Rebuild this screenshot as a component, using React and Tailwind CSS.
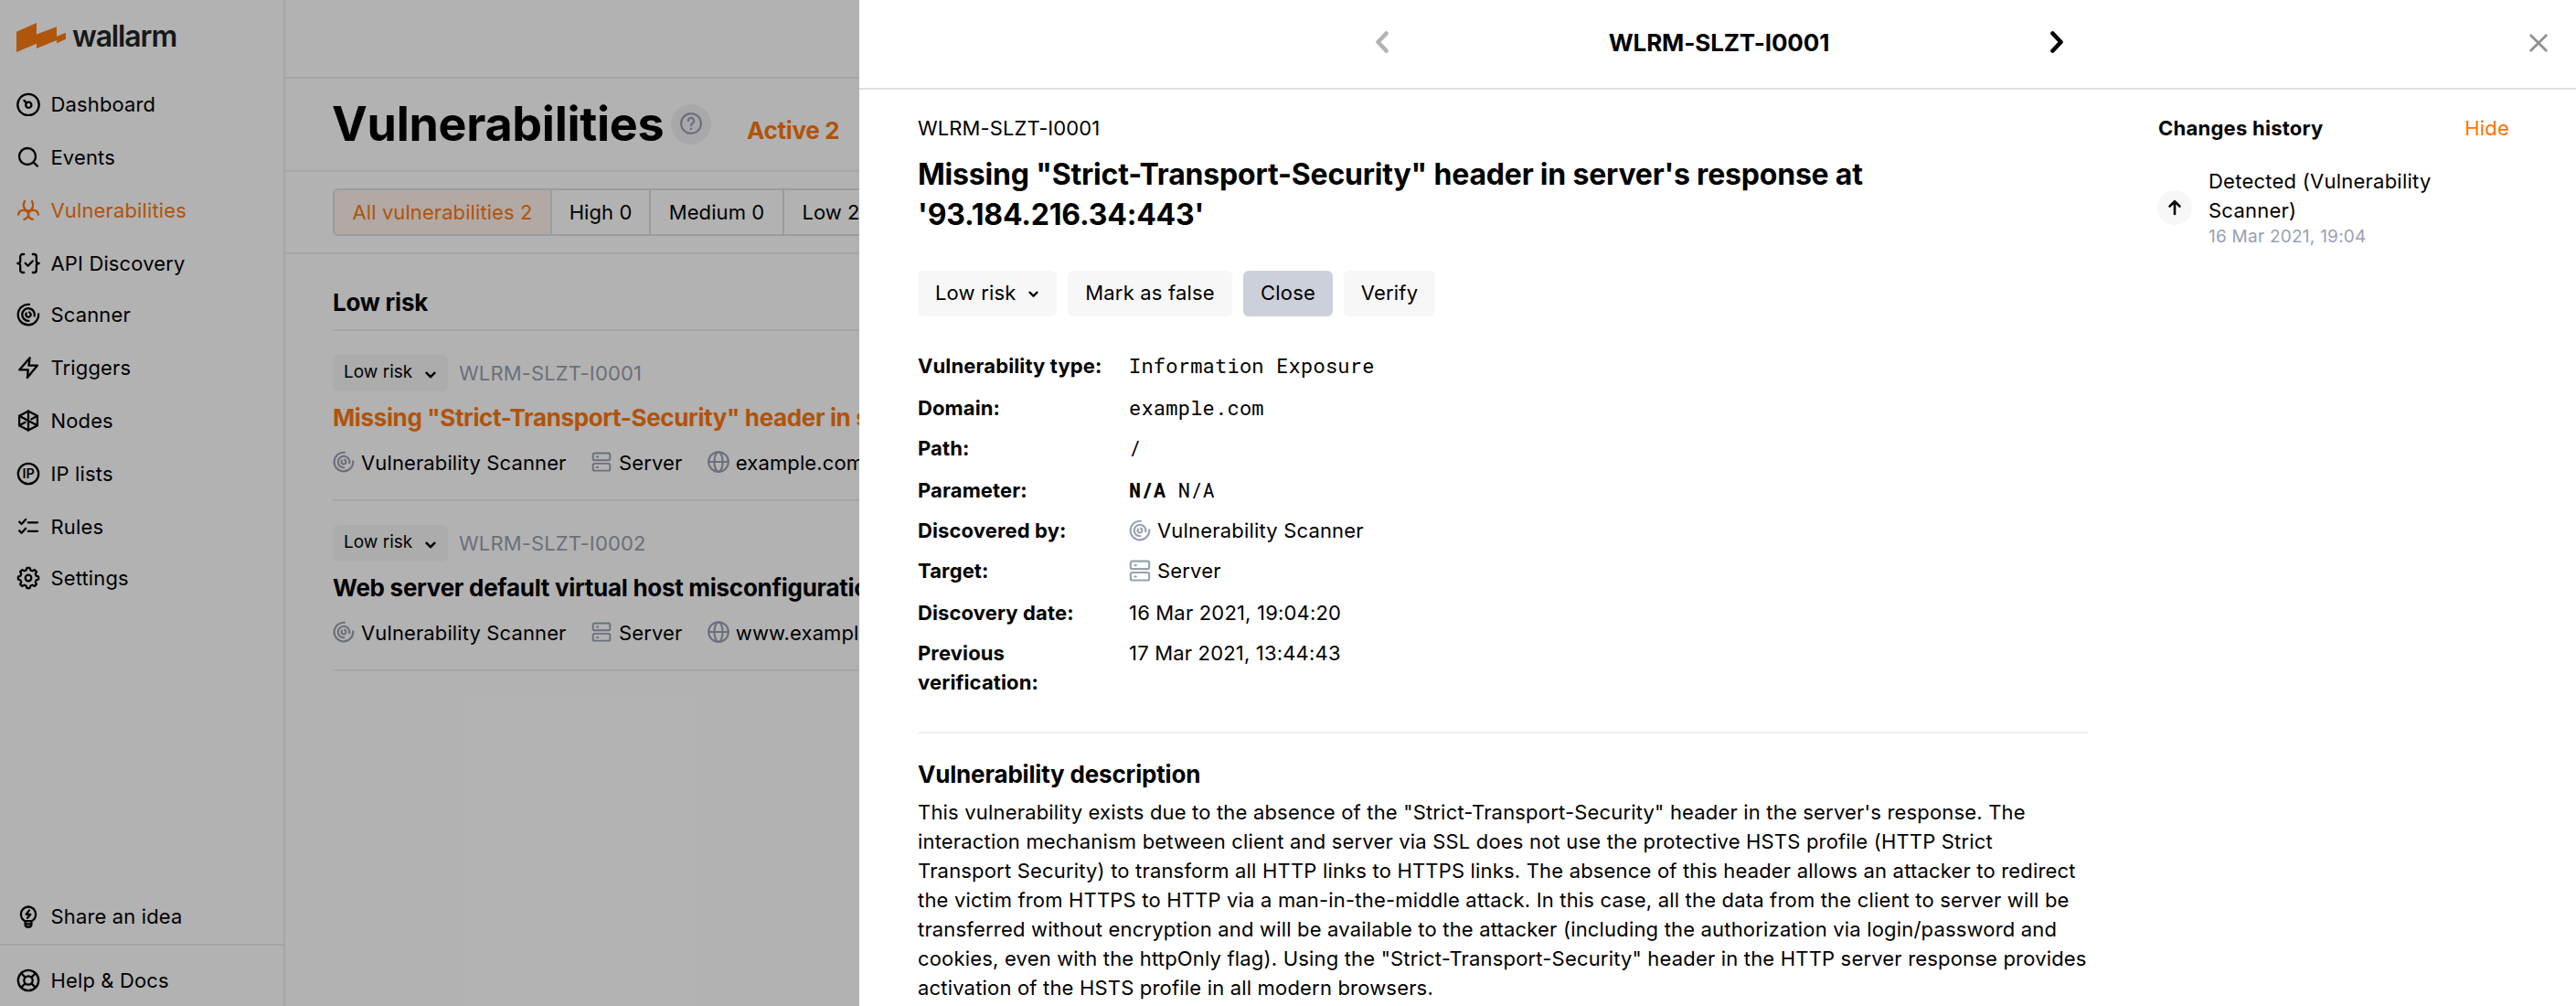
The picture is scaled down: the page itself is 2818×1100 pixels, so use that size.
import React from 'react';

const gearPath = (() => {
  const pts = [];
  for (let i = 0; i < 8; i++) {
    const base = (i * Math.PI) / 4 - Math.PI / 2;
    [[-0.27, 8.9], [-0.13, 11.2], [0.13, 11.2], [0.27, 8.9]].forEach(([d, r]) => {
      pts.push(`${(13 + r * Math.cos(base + d)).toFixed(2)} ${(13 + r * Math.sin(base + d)).toFixed(2)}`);
    });
  }
  return `M${pts.join('L')}Z`;
})();

function Icon({ className = '', stroke = 2.3, children }) {
  return (
    <svg
      viewBox="0 0 26 26"
      className={`shrink-0 ${className}`}
      fill="none"
      stroke="currentColor"
      strokeWidth={stroke}
      strokeLinecap="round"
      strokeLinejoin="round"
    >
      {children}
    </svg>
  );
}

const shapes = {
  dashboard: (
    <>
      <circle cx="13" cy="13.500" r="11.700" />
      <circle cx="13.300" cy="13.800" r="3.100" />
      <path d="M8.400 8.900l2.600 2.600" />
    </>
  ),
  search: (
    <>
      <circle cx="12" cy="12" r="9" />
      <path d="M18.600 18.600l4.400 4" />
    </>
  ),
  bio: (
    <>
      <path d="M9 2.900C6.400 7.600 8.400 13.300 13 13.300S19.600 7.600 17 2.900" />
      <path d="M2.100 17.600A5.600 5.600 0 0 1 13 17C13 20 11.200 22 8.300 22.900" />
      <path d="M23.900 17.600A5.600 5.600 0 0 0 13 17C13 20 14.800 22 17.700 22.900" />
    </>
  ),
  api: (
    <>
      <path d="M8.200 3H6.800A2.600 2.600 0 0 0 4.200 5.600V10.500C4.200 12 3 13 1.300 13 3 13 4.200 14 4.200 15.500V20.400A2.600 2.600 0 0 0 6.800 23H8.200" />
      <path d="M17.800 3H19.200A2.600 2.600 0 0 1 21.800 5.600V10.500C21.800 12 23 13 24.700 13 23 13 21.800 14 21.800 15.500V20.400A2.600 2.600 0 0 1 19.200 23H17.800" />
      <path d="M9.600 12.800l3 3 5.200-5.400" />
    </>
  ),
  scanner: (
    <>
      <path d="M14 1.900A11.200 11.200 0 1 0 24.100 12.300" />
      <path d="M13.400 19.800A6.800 6.800 0 1 1 19.700 14.400" />
      <path d="M10.800 11.400A2.700 2.700 0 1 0 14 10.500" />
    </>
  ),
  triggers: <path d="M14.600 2.200L3.200 15.400H12.800L11.900 24L23 10.600H13.400Z" />,
  nodes: (
    <>
      <path d="M13 2.500L22.900 7.800V18.200L13 23.500L3.100 18.200V7.800Z" />
      <path d="M13 2.500V23.500M3.100 7.800L22.900 18.200M22.900 7.800L16.500 11.200M3.100 18.200L9.500 14.800" />
    </>
  ),
  ip: (
    <>
      <circle cx="13" cy="13" r="11.200" />
      <text x="13.300" y="18.300" textAnchor="middle" fontSize="14.500" fontWeight="600" fontFamily="Inter" fill="currentColor" stroke="none">IP</text>
    </>
  ),
  rules: (
    <>
      <path d="M3.200 7.600l2.400 2.400 4.600-5M3.200 17.400l2.400 2.400 4.600-5" />
      <path d="M12.800 8.300H23M12.800 17.900H23" />
    </>
  ),
  settings: (
    <>
      <path d={gearPath} />
      <circle cx="13" cy="13" r="3.300" />
    </>
  ),
  idea: (
    <>
      <path d="M9.600 18.200C6.600 17 4.900 13.900 4.900 10.600A8.100 8.100 0 0 1 21.100 10.600C21.100 13.900 19.400 17 16.400 18.200Z" />
      <path d="M9.600 18.200V21.800A2.400 2.400 0 0 0 12 24.500H14A2.400 2.400 0 0 0 16.400 21.800V18.200M10 21.300H16" />
      <path d="M13.900 6.500L10.600 10.800H15.400L12 14.800" />
    </>
  ),
  help: (
    <>
      <circle cx="13" cy="13" r="11.200" />
      <circle cx="13" cy="13" r="4.700" />
      <path d="M5.200 5.200L9.600 9.600M20.800 5.200L16.400 9.600M5.200 20.800L9.600 16.400M20.800 20.800L16.400 16.400" />
    </>
  ),
  server: (
    <>
      <rect x="2" y="1.800" width="22" height="9.200" rx="2" />
      <rect x="2" y="15.200" width="22" height="9.200" rx="2" />
      <path d="M7 6.600h1.400M7 20h1.400" />
    </>
  ),
  globe: (
    <>
      <circle cx="13" cy="13" r="11.700" />
      <ellipse cx="13" cy="13" rx="4.900" ry="11.700" />
      <path d="M1.300 13H24.700" />
    </>
  ),
};

const nav = [
  { label: 'Dashboard', icon: 'dashboard' },
  { label: 'Events', icon: 'search' },
  { label: 'Vulnerabilities', icon: 'bio', active: true },
  { label: 'API Discovery', icon: 'api' },
  { label: 'Scanner', icon: 'scanner', tight: true },
  { label: 'Triggers', icon: 'triggers' },
  { label: 'Nodes', icon: 'nodes' },
  { label: 'IP lists', icon: 'ip' },
  { label: 'Rules', icon: 'rules' },
  { label: 'Settings', icon: 'settings', tight: true },
];

function NavItem({ label, icon, active, tight }) {
  return (
    <a className={`flex h-[58px] items-center gap-[11.5px] pl-[18px] tracking-[0.14px] ${tight ? '-mt-0.5' : ''} ${active ? 'text-[#fc7811]' : 'text-black'}`}>
      <Icon className="size-[26px]">{shapes[icon]}</Icon>
      <span>{label}</span>
    </a>
  );
}

function Logo() {
  return (
    <div className="flex h-[85px] items-start pl-[18px]">
      <svg viewBox="0 0 54 32" className="mt-[25px] h-8 w-[54px] shrink-0" fill="#fc7c11">
        <path d="M0 9.700L22 0V12.600L44 4.300V14.700L54 10.700V17.700L44 22.300V19L22 28V22.800L0 32Z" />
      </svg>
      <span className="mt-5 ml-[7px] text-[32px] leading-10 font-semibold tracking-[-1.15px] text-[#222426]">wallarm</span>
    </div>
  );
}

function Sidebar() {
  return (
    <aside className="flex h-full w-[312px] shrink-0 flex-col border-r-2 border-[#ededf3]">
      <Logo />
      <nav className="flex flex-col">
        {nav.map((n) => <NavItem key={n.label} {...n} />)}
      </nav>
      <div className="mt-auto flex flex-col">
        <NavItem label="Share an idea" icon="idea" />
        <div className="mt-px border-t-2 border-[#ededf3] pt-[9px]">
          <div className="-mb-px"><NavItem label="Help & Docs" icon="help" /></div>
        </div>
      </div>
    </aside>
  );
}

function Chevron({ className }) {
  return (
    <svg viewBox="0 0 12 8" className={`shrink-0 ${className}`} fill="none" stroke="currentColor" strokeWidth="2.600" strokeLinecap="round" strokeLinejoin="round">
      <path d="M1.700 1.800L6 6.200L10.300 1.800" />
    </svg>
  );
}

const items = [
  { id: 'WLRM-SLZT-I0001', title: 'Missing "Strict-Transport-Security" header in server\'s response', host: 'example.com', active: true },
  { id: 'WLRM-SLZT-I0002', title: 'Web server default virtual host misconfiguration', host: 'www.example.com' },
];

function ListItem({ id, title, host, active }) {
  return (
    <article className="border-b-2 border-[#ededf3] pt-[26px] pb-6">
      <div className="flex h-10 items-center gap-3">
        <div className="flex h-10 w-[126px] items-center gap-3.5 rounded-md bg-[#f7f7f7] pl-3 text-[19px] tracking-normal">
          <span className="-mt-0.5">Low risk</span>
          <Chevron className="mt-1 h-2 w-3" />
        </div>
        <span className="tracking-[0.15px] text-[#98a1b0]">{id}</span>
      </div>
      <h3 className={`mt-[13px] truncate text-[26px] leading-8 font-bold text-clip ${active ? 'tracking-[-0.37px] text-[#fc7811]' : 'tracking-[-0.28px] text-black'}`}>{title}</h3>
      <div className="mt-[17px] flex gap-[27.5px] tracking-[0.12px]">
        <span className="flex gap-[7px]"><Icon className="mt-[3px] size-6 text-[#98a1b0]">{shapes.scanner}</Icon>Vulnerability Scanner</span>
        <span className="flex gap-2"><Icon className="mt-1 size-[22px] text-[#98a1b0]">{shapes.server}</Icon>Server</span>
        <span className="flex gap-[7px]"><Icon className="mt-[3px] size-6 text-[#98a1b0]">{shapes.globe}</Icon>{host}</span>
      </div>
    </article>
  );
}

function Main() {
  return (
    <main className="w-[628px] shrink-0 overflow-hidden whitespace-nowrap">
      <div className="h-[86px] border-b-2 border-[#ededf3]" />
      <div className="flex h-[102px] items-start border-b-2 border-[#ededf3] pl-[51px]">
        <h1 className="mt-[18px] w-[371px] text-[52px] leading-[64px] font-bold tracking-[-0.28px]">Vulnerabilities</h1>
        <div className="mt-7 flex size-11 shrink-0 items-center justify-center rounded-full bg-[#f1f1f4] text-[#98a1b0]">
          <svg viewBox="0 0 26 26" className="-mt-0.5 size-[26px]" fill="none" stroke="currentColor" strokeWidth="2.200" strokeLinecap="round" strokeLinejoin="round">
            <circle cx="13" cy="13" r="10.900" />
            <path d="M9.900 10.200A3.100 3.100 0 1 1 14.600 12.700C13.500 13.400 13 13.900 13 15" />
            <path d="M13 18.700v.1" strokeWidth="2.600" />
          </svg>
        </div>
        <span className="mt-[41px] ml-[39px] text-[26px] leading-8 font-bold tracking-[-0.3px] text-[#fc7811]">Active 2</span>
      </div>
      <div className="border-b-2 border-[#ededf3] py-[18px] pl-[52px]">
        <div className="flex h-[52px] w-max overflow-hidden rounded-md border-2 border-[#dbdfe5] tracking-[0.08px]">
          <span className="flex w-[238px] items-center justify-center border-r-2 border-[#dbdfe5] bg-[#fff3eb] text-[#fc7811]">All vulnerabilities 2</span>
          <span className="flex w-[108px] items-center justify-center border-r-2 border-[#dbdfe5]">High 0</span>
          <span className="flex w-[146px] items-center justify-center border-r-2 border-[#dbdfe5]">Medium 0</span>
          <span className="flex w-[102px] items-center justify-center">Low 2</span>
        </div>
      </div>
      <div className="ml-[52px]">
        <h2 className="border-b-2 border-[#ededf3] pt-[37px] pb-[13px] text-[26px] leading-8 font-bold tracking-[-0.25px]">Low risk</h2>
        {items.map((i) => <ListItem key={i.id} {...i} />)}
      </div>
    </main>
  );
}

const details = [
  { k: 'Vulnerability type:', v: 'Information Exposure', mono: true, h: 'h-[46px]' },
  { k: 'Domain:', v: 'example.com', mono: true, h: 'h-11' },
  { k: 'Path:', v: '/', mono: true, h: 'h-[46px]' },
  { k: 'Parameter:', v: <><b className="font-bold">N/A</b> N/A</>, mono: true, h: 'h-11' },
  { k: 'Discovered by:', v: 'Vulnerability Scanner', icon: 'scanner', h: 'h-11' },
  { k: 'Target:', v: 'Server', icon: 'server', h: 'h-[46px]' },
  { k: 'Discovery date:', v: '16 Mar 2021, 19:04:20', h: 'h-11' },
  { k: 'Previous verification:', v: '17 Mar 2021, 13:44:43', h: 'h-16' },
];

function Details() {
  return (
    <dl className="mt-[38px]">
      {details.map((d) => (
        <div key={d.k} className={`flex ${d.h}`}>
          <dt className="w-[231px] pr-20 font-bold tracking-[0.12px]">
            <span className={d.h === 'h-16' ? 'block' : 'whitespace-nowrap'}>{d.k}</span>
          </dt>
          <dd className={`flex gap-[7px] whitespace-pre ${d.mono ? "font-['Roboto_Mono','Liberation_Mono',monospace] tracking-[0.23px]" : 'tracking-[0.18px]'}`}>
            {d.icon && <Icon className="mt-1 size-6 text-[#98a1b2]">{shapes[d.icon]}</Icon>}
            <span>{d.v}</span>
          </dd>
        </div>
      ))}
    </dl>
  );
}

function History() {
  return (
    <aside className="ml-[76px] w-[385px]">
      <div className="flex justify-between">
        <h2 className="pl-px font-bold tracking-[0.25px]">Changes history</h2>
        <a className="text-[#fc7303]">Hide</a>
      </div>
      <div className="mt-[26px] flex items-center gap-[18px]">
        <div className="flex size-[38px] shrink-0 items-center justify-center rounded-full bg-[#f7f7f7]">
          <svg viewBox="0 0 16 18" className="h-[18px] w-4" fill="none" stroke="currentColor" strokeWidth="2.600" strokeLinecap="round" strokeLinejoin="round">
            <path d="M8 16V2.300M2.500 7.600L8 2.200L13.500 7.600" />
          </svg>
        </div>
        <div className="w-[300px]">
          <p className="tracking-[0.24px]">Detected (Vulnerability Scanner)</p>
          <p className="text-[19px] leading-[26px] tracking-[0.25px] text-[#98a1b2]">16 Mar 2021, 19:04</p>
        </div>
      </div>
    </aside>
  );
}

function Drawer() {
  return (
    <section className="absolute inset-y-0 right-0 left-[940px] overflow-hidden bg-white">
      <header className="flex h-[98px] items-center border-b-2 border-[#dbdfe4] pb-1">
        <svg viewBox="0 0 16 24" className="ml-[564px] h-6 w-4 shrink-0 text-[#b3b3b3]" fill="none" stroke="currentColor" strokeWidth="4.600" strokeLinecap="round" strokeLinejoin="round">
          <path d="M12.500 2.500L3.500 12L12.500 21.500" />
        </svg>
        <h2 className="mt-0.5 w-[722px] pr-px text-center text-[26px] leading-8 font-bold tracking-[-0.12px]">WLRM-SLZT-I0001</h2>
        <svg viewBox="0 0 16 24" className="h-6 w-4 shrink-0" fill="none" stroke="currentColor" strokeWidth="4.600" strokeLinecap="round" strokeLinejoin="round">
          <path d="M3.500 2.500L12.500 12L3.500 21.500" />
        </svg>
        <svg viewBox="0 0 20 20" className="mt-0.5 mr-[31px] ml-auto size-5 text-[#919191]" fill="none" stroke="currentColor" strokeWidth="2.800" strokeLinecap="round">
          <path d="M1.700 1.700L18.300 18.300M18.300 1.700L1.700 18.300" />
        </svg>
      </header>
      <div className="flex pt-[26px] pl-16">
        <article className="w-[1280px] shrink-0">
          <p className="tracking-[0.1px]">WLRM-SLZT-I0001</p>
          <h1 className="mt-[13px] w-[1100px] text-[32px] leading-[44px] font-bold tracking-[-0.19px]">
            Missing "Strict-Transport-Security" header in server's response at '93.184.216.34:443'
          </h1>
          <div className="mt-[39px] flex gap-3">
            <button className="flex h-[50px] w-[152px] items-center gap-[13px] rounded-md bg-[#f7f7f7] pb-0.5 pl-[19px]">
              Low risk
              <Chevron className="mt-1 h-[7.500px] w-[11px]" />
            </button>
            <button className="h-[50px] w-[180px] rounded-md bg-[#f7f7f7] pb-0.5">Mark as false</button>
            <button className="h-[50px] w-[98px] rounded-md bg-[#ccd0da] pb-0.5">Close</button>
            <button className="h-[50px] w-[100px] rounded-md bg-[#f7f7f7] pb-0.5">Verify</button>
          </div>
          <Details />
          <hr className="mt-[38px] border-t-2 border-[#eeeff3]" />
          <h2 className="mt-[29px] text-[26px] leading-8 font-bold tracking-[-0.18px]">Vulnerability description</h2>
          <p className="mt-[9px]">
            This vulnerability exists due to the absence of the "Strict-Transport-Security" header in the server's response. The interaction mechanism between client and server via SSL does not use the protective HSTS profile (HTTP Strict Transport Security) to transform all HTTP links to HTTPS links. The absence of this header allows an attacker to redirect the victim from HTTPS to HTTP via a man-in-the-middle attack. In this case, all the data from the client to server will be transferred without encryption and will be available to the attacker (including the authorization via login/password and cookies, even with the httpOnly flag). Using the "Strict-Transport-Security" header in the HTTP server response provides activation of the HSTS profile in all modern browsers.
          </p>
        </article>
        <History />
      </div>
    </section>
  );
}

export default function App() {
  return (
    <div className="relative flex h-[1100px] w-full overflow-hidden bg-white font-['Inter',sans-serif] text-[22px] leading-8 tracking-[0.18px] text-black">
      <Sidebar />
      <Main />
      <div className="absolute inset-0 bg-black/30" />
      <Drawer />
    </div>
  );
}
